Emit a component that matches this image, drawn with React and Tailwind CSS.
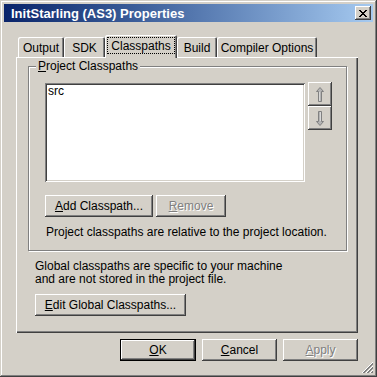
import React from "react";

const RAISED =
  "shadow-[inset_-1px_-1px_#404040,inset_1px_1px_#ffffff,inset_-2px_-2px_#808080,inset_2px_2px_#d4d0c8]";

function Btn({ className = "", children, disabled, isDefault }) {
  const text = disabled
    ? "text-[#808080] [text-shadow:1px_1px_0_#ffffff]"
    : "text-black";
  if (isDefault) {
    return (
      <div className={`border border-black bg-[#d4d0c8] ${className}`}>
        <div className={`w-full h-full flex items-center justify-center ${RAISED} ${text}`}>
          {children}
        </div>
      </div>
    );
  }
  return (
    <div className={`bg-[#d4d0c8] flex items-center justify-center ${RAISED} ${text} ${className}`}>
      {children}
    </div>
  );
}

function Tab({ className = "", children, selected }) {
  if (selected) {
    return (
      <div
        className={`relative z-10 h-[23px] -mb-[1px] bg-[#d4d0c8] rounded-t-[2px] shadow-[inset_1px_1px_#ffffff,inset_-1px_0_#404040,inset_-2px_0_#808080] flex flex-col ${className}`}
      >
        <div className="mx-[2px] mt-[2px] h-[17px] border border-dotted border-black flex items-center justify-center leading-none">
          {children}
        </div>
      </div>
    );
  }
  return (
    <div
      className={`h-[20px] rounded-t-[2px] bg-[#d4d0c8] shadow-[inset_1px_1px_#ffffff,inset_-1px_0_#404040,inset_-2px_0_#808080] flex items-center justify-center leading-none pt-[1px] ${className}`}
    >
      {children}
    </div>
  );
}

function Arrow({ down }) {
  return (
    <svg width="8" height="15" viewBox="0 0 8 15" className={down ? "rotate-180" : ""}>
      <polygon
        points="4,0.5 7.5,4.5 5.5,4.5 5.5,14.5 2.5,14.5 2.5,4.5 0.5,4.5"
        fill="#b4b4b4"
        stroke="#808080"
        strokeWidth="1"
      />
      <line x1="3.5" y1="5" x2="3.5" y2="14" stroke="#d8d8d8" strokeWidth="1" />
    </svg>
  );
}

export default function App() {
  return (
    <div className="w-[377px] h-[377px] bg-[#d4d0c8] p-[4px] flex flex-col font-['Liberation_Sans',Arial,sans-serif] text-[12px] text-black select-none shadow-[inset_-1px_-1px_#404040,inset_1px_1px_#d4d0c8,inset_-2px_-2px_#808080,inset_2px_2px_#ffffff]">
      {/* Title bar */}
      <div className="h-[18px] flex items-center bg-linear-to-r from-[#0a246a] to-[#a6caf0] pl-[7px] pr-[2px]">
        <span className="flex-1 text-white font-bold text-[13px] leading-none">
          InitStarling (AS3) Properties
        </span>
        <div className={`w-[16px] h-[14px] bg-[#d4d0c8] flex items-center justify-center ${RAISED}`}>
          <svg width="8" height="7" viewBox="0 0 8 7" shapeRendering="crispEdges">
            <path
              d="M0 0h2v1h1v1h2V1h1V0h2v1H7v1H6v1H5v1h1v1h1v1h1v1H6V6H5V5H3v1H2v1H0V6h1V5h1V4h1V3H2V2H1V1H0z"
              fill="#000"
            />
          </svg>
        </div>
      </div>

      {/* Tabs */}
      <div className="mt-[13px] ml-[14px] h-[22px] flex items-end">
        <Tab className="w-[46px]">Output</Tab>
        <Tab className="w-[41px]">SDK</Tab>
        <Tab className="w-[72px]" selected>
          Classpaths
        </Tab>
        <Tab className="w-[40px]">Build</Tab>
        <Tab className="w-[100px]">Compiler Options</Tab>
      </div>

      {/* Panel */}
      <div className="ml-[12px] w-[342px] h-[276px] flex flex-col pt-[9px] pl-[12px] shadow-[inset_1px_1px_#ffffff,inset_-1px_-1px_#404040,inset_-2px_-2px_#808080]">
        {/* Group box */}
        <div className="w-[319px] h-[185px] border border-[#808080] shadow-[inset_1px_1px_#ffffff,1px_1px_#ffffff] flex flex-col">
          <div className="-mt-[8px] ml-[7px] self-start px-[2px] bg-[#d4d0c8] leading-[14px]">
            <span className="underline underline-offset-[1px]">P</span>roject Classpaths
          </div>
          <div className="mt-[10px] ml-[16px] flex items-start">
            <div className="w-[260px] h-[99px] bg-white px-[3px] pt-[2px] leading-[12px] shadow-[inset_1px_1px_#808080,inset_-1px_-1px_#ffffff,inset_2px_2px_#404040,inset_-2px_-2px_#d4d0c8]">
              src
            </div>
            <div className="ml-[3px] -mt-[1px] flex flex-col">
              <div className={`w-[24px] h-[24px] bg-[#d4d0c8] flex items-center justify-center ${RAISED}`}>
                <Arrow />
              </div>
              <div className={`w-[24px] h-[24px] bg-[#d4d0c8] flex items-center justify-center ${RAISED}`}>
                <Arrow down />
              </div>
            </div>
          </div>
          <div className="mt-[13px] ml-[16px] flex gap-[3px]">
            <Btn className="w-[108px] h-[22px]">
              <span>
                <span className="underline underline-offset-[1px]">A</span>dd Classpath...
              </span>
            </Btn>
            <Btn className="w-[70px] h-[22px]" disabled>
              <span>
                <span className="underline underline-offset-[1px]">R</span>emove
              </span>
            </Btn>
          </div>
          <div className="mt-[8px] ml-[17px] leading-[14px]">
            Project classpaths are relative to the project location.
          </div>
        </div>

        <div className="mt-[9px] ml-[7px] leading-[13px]">
          <div>Global classpaths are specific to your machine</div>
          <div>and are not stored in the project file.</div>
        </div>
        <Btn className="mt-[8px] ml-[7px] w-[151px] h-[22px] self-start">
          <span>
            <span className="underline underline-offset-[1px]">E</span>dit Global Classpaths...
          </span>
        </Btn>
      </div>

      {/* Bottom buttons */}
      <div className="mt-[6px] flex justify-end gap-[6px] pr-[15px]">
        <Btn className="w-[76px] h-[22px]" isDefault>
          <span>
            <span className="underline underline-offset-[1px]">O</span>K
          </span>
        </Btn>
        <Btn className="w-[75px] h-[22px]">
          <span>
            <span className="underline underline-offset-[1px]">C</span>ancel
          </span>
        </Btn>
        <Btn className="w-[75px] h-[22px]" disabled>
          <span>
            <span className="underline underline-offset-[1px]">A</span>pply
          </span>
        </Btn>
      </div>

      {/* Size grip */}
      <div className="h-[12px] flex justify-end">
        <svg width="12" height="12" viewBox="0 0 12 12">
          <line x1="12" y1="1" x2="1" y2="12" stroke="#ffffff" strokeWidth="1" />
          <line x1="12" y1="2" x2="2" y2="12" stroke="#808080" strokeWidth="1" />
          <line x1="12" y1="3" x2="3" y2="12" stroke="#808080" strokeWidth="1" />
          <line x1="12" y1="5" x2="5" y2="12" stroke="#ffffff" strokeWidth="1" />
          <line x1="12" y1="6" x2="6" y2="12" stroke="#808080" strokeWidth="1" />
          <line x1="12" y1="7" x2="7" y2="12" stroke="#808080" strokeWidth="1" />
          <line x1="12" y1="9" x2="9" y2="12" stroke="#ffffff" strokeWidth="1" />
          <line x1="12" y1="10" x2="10" y2="12" stroke="#808080" strokeWidth="1" />
          <line x1="12" y1="11" x2="11" y2="12" stroke="#808080" strokeWidth="1" />
        </svg>
      </div>
    </div>
  );
}
